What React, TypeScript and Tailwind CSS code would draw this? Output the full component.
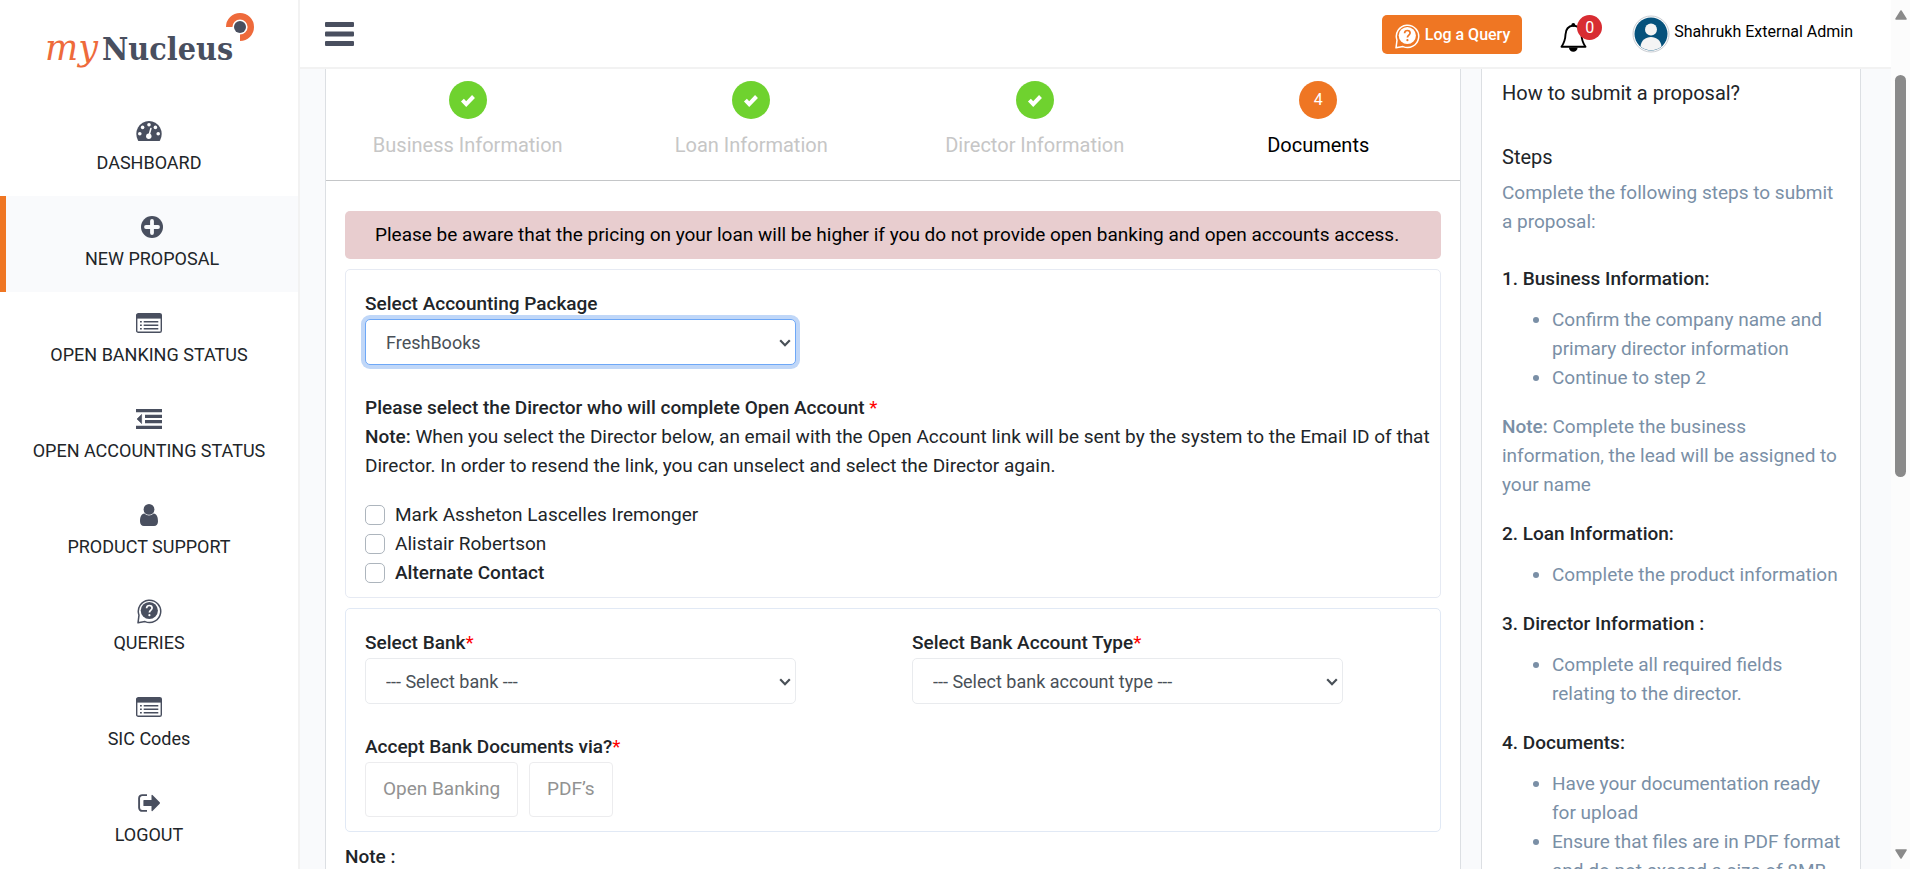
import { useState } from "react";
import type { ReactNode } from "react";

function Logo() {
  return (
    <svg width="212" height="60" viewBox="43 10 212 60" role="img" aria-label="myNucleus">
      <text x="45" y="60" fontSize="35" fontStyle="italic" fill="#ee6a3b" fontFamily="'DejaVu Serif', 'Liberation Serif', serif">my</text>
      <text x="102" y="60" fontSize="32" fontWeight="700" fill="#494f5f" fontFamily="'DejaVu Serif Condensed', 'DejaVu Serif', serif">Nucleus</text>
      <path d="M229.2 27A10.8 10.8 0 1 1 240 37.8" fill="none" stroke="#ee6a3b" strokeWidth="6.4" />
      <circle cx="240" cy="27" r="6" fill="#494f5f" />
    </svg>
  );
}

const gauge = (
  <svg width="26" height="20" viewBox="0 0 26 20">
    <path d="M13 0a13 13 0 0 0-11 19.4q.4.6 1 .6h20q.6 0 1-.6A13 13 0 0 0 13 0z" fill="#494f5f" />
    <g fill="#fff">
      <circle cx="3.8" cy="12.8" r="1.8" /><circle cx="6.6" cy="6.4" r="1.8" /><circle cx="13" cy="3.8" r="1.8" />
      <circle cx="19.4" cy="6.4" r="1.8" /><circle cx="22.2" cy="12.8" r="1.8" />
      <circle cx="12.8" cy="15.2" r="2.7" />
    </g>
    <path d="M13 14.5l1.9-7" stroke="#fff" strokeWidth="1.5" strokeLinecap="round" />
  </svg>
);

const plus = (
  <svg width="22" height="22" viewBox="0 0 22 22">
    <circle cx="11" cy="11" r="11" fill="#494f5f" />
    <path d="M11 5v12M5 11h12" stroke="#f9fafc" strokeWidth="3.8" strokeLinecap="round" />
  </svg>
);

const listAlt = (
  <svg width="26" height="20" viewBox="0 0 26 20">
    <rect x="0.7" y="0.7" width="24.6" height="18.6" rx="1.6" fill="#fff" stroke="#494f5f" strokeWidth="1.4" />
    <path d="M0.7 1h24.6v4.6h-24.6z" fill="#494f5f" />
    <path d="M4 8.7h1.8M7.7 8.7h14.6M4 12.2h1.8M7.7 12.2h14.6M4 15.7h1.8M7.7 15.7h14.6" stroke="#494f5f" strokeWidth="1.5" />
  </svg>
);

const outdent = (
  <svg width="26" height="20" viewBox="0 0 26 20">
    <path d="M0 1.6h26M9 7.3h17M9 12.7h17M0 18.4h26" stroke="#494f5f" strokeWidth="3.2" />
    <path d="M5.6 5.4v9.2L1 10z" fill="#494f5f" stroke="#494f5f" strokeWidth="0.6" strokeLinejoin="round" />
  </svg>
);

const user = (
  <svg width="18" height="22" viewBox="0 0 18 22">
    <path d="M4.4 9.6C1.2 10 0 13.2 0 17.2 0 20 1.5 22 4 22h10c2.500 0 4-2 4-4.800 0-4-1.200-7.200-4.400-7.600a6.600 6.600 0 0 1-9.200 0z" fill="#494f5f" />
    <circle cx="9" cy="5.4" r="5.4" fill="#494f5f" />
  </svg>
);

function QueryIcon({ ink, paper, size }: { ink: string; paper: string; size: number }) {
  return (
    <svg width={size} height={size} viewBox="0 0 26 26" aria-hidden="true">
      <path d="M2 24.8l1-7.6A11.2 11.2 0 1 1 9 23.6z" fill="none" stroke={ink} strokeWidth="1.5" strokeLinejoin="round" />
      <circle cx="13.3" cy="12.5" r="8.6" fill={ink} />
      <path d="M10.6 10.2c0-1.7 1.2-2.7 2.7-2.7s2.8 1 2.8 2.5c0 2-2.7 2.3-2.7 4.6" fill="none" stroke={paper} strokeWidth="1.7" />
      <circle cx="13.4" cy="17.2" r="1.1" fill={paper} />
    </svg>
  );
}

const signOut = (
  <svg width="22" height="18" viewBox="0 0 22 18">
    <path d="M9 1.1H4.3A3.2 3.2 0 0 0 1.1 4.3v9.4a3.2 3.2 0 0 0 3.2 3.2H9" fill="none" stroke="#494f5f" strokeWidth="1.9" />
    <path d="M6 6h7.5V1.3q.2-.8 1-.3l7.2 7.3q.5.7 0 1.4L14.5 17q-.8.5-1-.3V12H6q-.6 0-.6-.6V6.6Q5.4 6 6 6z" fill="#494f5f" />
  </svg>
);

const menu: { label: string; icon: ReactNode; active?: boolean }[] = [
  { label: "DASHBOARD", icon: gauge },
  { label: "NEW PROPOSAL", icon: plus, active: true },
  { label: "OPEN BANKING STATUS", icon: listAlt },
  { label: "OPEN ACCOUNTING STATUS", icon: outdent },
  { label: "PRODUCT SUPPORT", icon: user },
  { label: "QUERIES", icon: <QueryIcon ink="#494f5f" paper="#fff" size={26} /> },
  { label: "SIC Codes", icon: listAlt },
  { label: "LOGOUT", icon: signOut },
];

function Sidebar() {
  return (
    <aside className="w-[300px] shrink-0 border-r-2 border-[#f2f2f2] bg-white">
      <div className="flex h-[100px] items-start justify-center pt-[10px]">
        <Logo />
      </div>
      <nav>
        {menu.map((item) => (
          <a
            key={item.label}
            href="#"
            className={
              item.active
                ? "flex h-24 flex-col items-center gap-[6px] border-l-[6px] border-[#ef7623] bg-[#f9fafc] pt-[19px]"
                : "flex h-24 flex-col items-center gap-[6px] pt-[19px]"
            }
          >
            <span className="flex h-6 items-center">{item.icon}</span>
            <span className="text-[18px] leading-7 text-[#212529]">{item.label}</span>
          </a>
        ))}
      </nav>
    </aside>
  );
}

function Header() {
  return (
    <header className="flex h-[69px] shrink-0 items-start justify-between border-b-2 border-[#f2f2f2] bg-white pr-[38px] pl-[25px]">
      <button type="button" aria-label="Toggle menu" className="mt-[22px]">
        <svg width="29" height="24" viewBox="0 0 29 24">
          <g fill="#494f5f">
            <rect width="29" height="5" rx="1" /><rect y="9.5" width="29" height="5" rx="1" /><rect y="19" width="29" height="5" rx="1" />
          </g>
        </svg>
      </button>
      <div className="flex items-start">
        <button type="button" className="mt-[15px] flex h-[39px] items-center gap-[5px] rounded-[5px] bg-[#ef7623] px-3 text-[16px] font-medium text-white">
          <span className="pt-[3px]"><QueryIcon ink="#fff" paper="#ef7623" size={26} /></span>
          Log a Query
        </button>
        <button type="button" aria-label="Notifications" className="relative mt-[22px] ml-[38px]">
          <svg width="27" height="30" viewBox="0 0 27 30">
            <path d="M13.3 3.5c-5 .6-7.6 4-7.8 9-.2 6-1.5 8.5-4 12.3h24c-2.7-3.8-3.8-6.3-4-12.3-.2-5-3-8.4-8.2-9z" fill="#fff" stroke="#000" strokeWidth="1.9" strokeLinejoin="round" />
            <path d="M9 25.5h8.600a4.300 4.300 0 0 1-8.600 0z" fill="#000" />
            <circle cx="13.3" cy="2.8" r="1.9" fill="#000" />
          </svg>
          <span className="absolute -top-[7px] left-[17px] flex size-[25px] items-center justify-center rounded-full bg-[#d82c32] text-[16px] leading-none text-white">0</span>
        </button>
        <a href="#" className="mt-[15px] ml-[45px] flex items-start gap-1">
          <svg width="38" height="38" viewBox="0 0 38 38" aria-hidden="true">
            <circle cx="19" cy="19" r="18" fill="#fff" stroke="#c8ccd2" strokeWidth="1" />
            <circle cx="19" cy="19" r="16.5" fill="#06527c" />
            <circle cx="19" cy="14.5" r="6" fill="#f4f4f4" />
            <path d="M8.500 31.500c.6-6 5-9.500 10.500-9.500s9.900 3.500 10.500 9.500A16.500 16.500 0 0 1 19 35.300a16.500 16.500 0 0 1-10.500-3.800z" fill="#f4f4f4" />
          </svg>
          <span className="pt-[5px] text-[16px] leading-6 text-black">Shahrukh External Admin</span>
        </a>
      </div>
    </header>
  );
}

const steps = ["Business Information", "Loan Information", "Director Information", "Documents"];

function Stepper() {
  return (
    <ol className="grid h-28 grid-cols-4 border-b border-[#c4c6c8] pt-3">
      {steps.map((step, i) => {
        const current = i === steps.length - 1;
        return (
          <li key={step} className="flex flex-col items-center gap-3">
            <span className={current ? "flex size-[38px] items-center justify-center rounded-full bg-[#ef7623] text-[16px] text-white" : "flex size-[38px] items-center justify-center rounded-full bg-[#6fd22f]"}>
              {current ? (
                i + 1
              ) : (
                <svg width="16" height="13" viewBox="0 0 16 13">
                  <path d="M2.400 6.200l3.800 3.900 7.300-7.600" fill="none" stroke="#fff" strokeWidth="4" />
                </svg>
              )}
            </span>
            <span className={current ? "text-[20px] leading-7 text-black" : "text-[20px] leading-7 text-[#c6c6c6]"}>{step}</span>
          </li>
        );
      })}
    </ol>
  );
}

const Star = () => <span className="font-normal text-[#ff0000]">*</span>;

function SelectField({ id, label, options, required, focused }: { id: string; label: string; options: string[]; required?: boolean; focused?: boolean }) {
  return (
    <div className="flex flex-col items-start pr-[11px] pl-[19px]">
      <label htmlFor={id} className="mb-[1px] text-[19px] leading-[29px] font-medium">
        {label}
        {required && <Star />}
      </label>
      <div className="relative w-10/12">
        <select
          id={id}
          className={
            focused
              ? "block h-[46px] w-full appearance-none rounded-[5px] border border-[#6ea8f7] bg-white px-5 text-[18px] text-[#495057] ring-4 ring-[#c0d7f8] outline-none"
              : "block h-[46px] w-full appearance-none rounded-[5px] border border-[#e9ebee] bg-white px-5 text-[18px] text-[#495057]"
          }
        >
          {options.map((o) => (
            <option key={o}>{o}</option>
          ))}
        </select>
        <svg width="12" height="8" viewBox="0 0 12 8" aria-hidden="true" className="pointer-events-none absolute top-5 right-[5px]">
          <path d="M1.200 1.300L6 6.200l4.800-4.900" fill="none" stroke="#495057" strokeWidth="2.200" />
        </svg>
      </div>
    </div>
  );
}

const directors = [
  { id: "mark", name: "Mark Assheton Lascelles Iremonger" },
  { id: "alistair", name: "Alistair Robertson" },
  { id: "alternate", name: "Alternate Contact", strong: true },
];

function AccountingCard() {
  return (
    <section className="mt-[10px] rounded-[5px] border border-[#e6eaf3] pt-[19px] pb-[10px]">
      <div className="grid grid-cols-2">
        <SelectField id="package" label="Select Accounting Package" options={["FreshBooks"]} focused />
      </div>
      <div className="mt-7 pr-1 pl-[19px] text-[19px] leading-[29px]">
        <p className="font-medium">
          Please select the Director who will complete Open Account <Star />
        </p>
        <p>
          <b className="font-medium">Note:</b> When you select the Director below, an email with the Open Account link will be sent by the system to the Email ID of that Director. In order to resend the link, you can unselect and select the Director again.
        </p>
        <ul className="mt-5">
          {directors.map((d) => (
            <li key={d.id} className="flex h-[29px] items-center gap-[10px]">
              <input id={d.id} type="checkbox" className="size-5 appearance-none rounded-[5px] border border-[#adb5bd] bg-white checked:bg-[#0d6efd]" />
              <label htmlFor={d.id} className={d.strong ? "font-medium" : ""}>{d.name}</label>
            </li>
          ))}
        </ul>
      </div>
    </section>
  );
}

function BankCard() {
  const [via, setVia] = useState("");
  return (
    <section className="mt-[10px] rounded-[5px] border border-[#e1e9f5] pt-[19px] pb-[14px]">
      <div className="grid grid-cols-2">
        <SelectField id="bank" label="Select Bank" options={["--- Select bank ---"]} required />
        <SelectField id="account-type" label="Select Bank Account Type" options={["--- Select bank account type ---"]} required />
      </div>
      <div className="mt-7 px-[19px]">
        <p className="text-[19px] leading-[29px] font-medium">
          Accept Bank Documents via?<Star />
        </p>
        <div className="mt-[1px] flex gap-[11px]">
          {["Open Banking", "PDF’s"].map((name) => (
            <button key={name} type="button" aria-pressed={via === name} onClick={() => setVia(name)} className="h-[55px] rounded-[4px] border border-[#ececee] px-[17px] text-[19px] text-[#929292]">
              {name}
            </button>
          ))}
        </div>
      </div>
    </section>
  );
}

const guide: { title: string; items: string[]; note?: string }[] = [
  {
    title: "1. Business Information:",
    items: ["Confirm the company name and primary director information", "Continue to step 2"],
    note: "Complete the business information, the lead will be assigned to your name",
  },
  { title: "2. Loan Information:", items: ["Complete the product information"] },
  { title: "3. Director Information :", items: ["Complete all required fields relating to the director."] },
  {
    title: "4. Documents:",
    items: ["Have your documentation ready for upload", "Ensure that files are in PDF format and do not exceed a size of 8MB"],
  },
];

function Guide() {
  return (
    <aside className="border-x border-[#dcdfe3] bg-white pt-3 pr-3 pl-5 text-[19px] leading-[29px] text-[#7a8fa6]">
      <h2 className="text-[20px] leading-6 text-[#212529]">How to submit a proposal?</h2>
      <h3 className="mt-10 text-[20px] leading-6 text-[#212529]">Steps</h3>
      <p className="mt-[9px] mb-7">Complete the following steps to submit a proposal:</p>
      <div className="flex flex-col gap-5">
        {guide.map((part) => (
          <section key={part.title}>
            <h4 className="font-medium text-[#212529]">{part.title}</h4>
            <ul className="mt-3 list-disc pl-[50px]">
              {part.items.map((item) => (
                <li key={item}>{item}</li>
              ))}
            </ul>
            {part.note && (
              <p className="mt-5">
                <b className="font-medium">Note:</b> {part.note}
              </p>
            )}
          </section>
        ))}
      </div>
    </aside>
  );
}

function ScrollTrack() {
  return (
    <div aria-hidden="true" className="flex w-[19px] shrink-0 flex-col items-center bg-[#fcfcfc] py-[10px]">
      <svg width="12" height="10" viewBox="0 0 12 10">
        <path d="M6 1l5 8H1z" fill="#8a8a8a" stroke="#8a8a8a" strokeWidth="1.5" strokeLinejoin="round" />
      </svg>
      <div className="flex w-full flex-1 flex-col items-center pt-[55px]">
        <div className="h-[52%] w-[11px] rounded-full bg-[#8a8a8a]" />
      </div>
      <svg width="12" height="10" viewBox="0 0 12 10">
        <path d="M6 9l5-8H1z" fill="#8a8a8a" stroke="#8a8a8a" strokeWidth="1.5" strokeLinejoin="round" />
      </svg>
    </div>
  );
}

export default function App() {
  return (
    <div className="flex h-screen overflow-hidden bg-[#f9fafc] font-[Roboto,sans-serif] text-[#212529]">
      <Sidebar />
      <div className="flex min-w-0 flex-1 flex-col">
        <Header />
        <main className="grid min-h-0 flex-1 grid-cols-[1fr_380px] gap-5 overflow-hidden pr-[30px] pl-[25px]">
          <div className="border-x border-[#dcdfe3] bg-white">
            <Stepper />
            <div className="px-[19px] pt-[30px]">
              <p className="rounded-[5px] bg-[#e8cdcf] px-[30px] py-[9px] text-[19px] leading-[30px] text-black">
                Please be aware that the pricing on your loan will be higher if you do not provide open banking and open accounts access.
              </p>
              <AccountingCard />
              <BankCard />
              <p className="mt-[10px] text-[19px] leading-[29px] font-medium">Note :</p>
            </div>
          </div>
          <Guide />
        </main>
      </div>
      <ScrollTrack />
    </div>
  );
}
